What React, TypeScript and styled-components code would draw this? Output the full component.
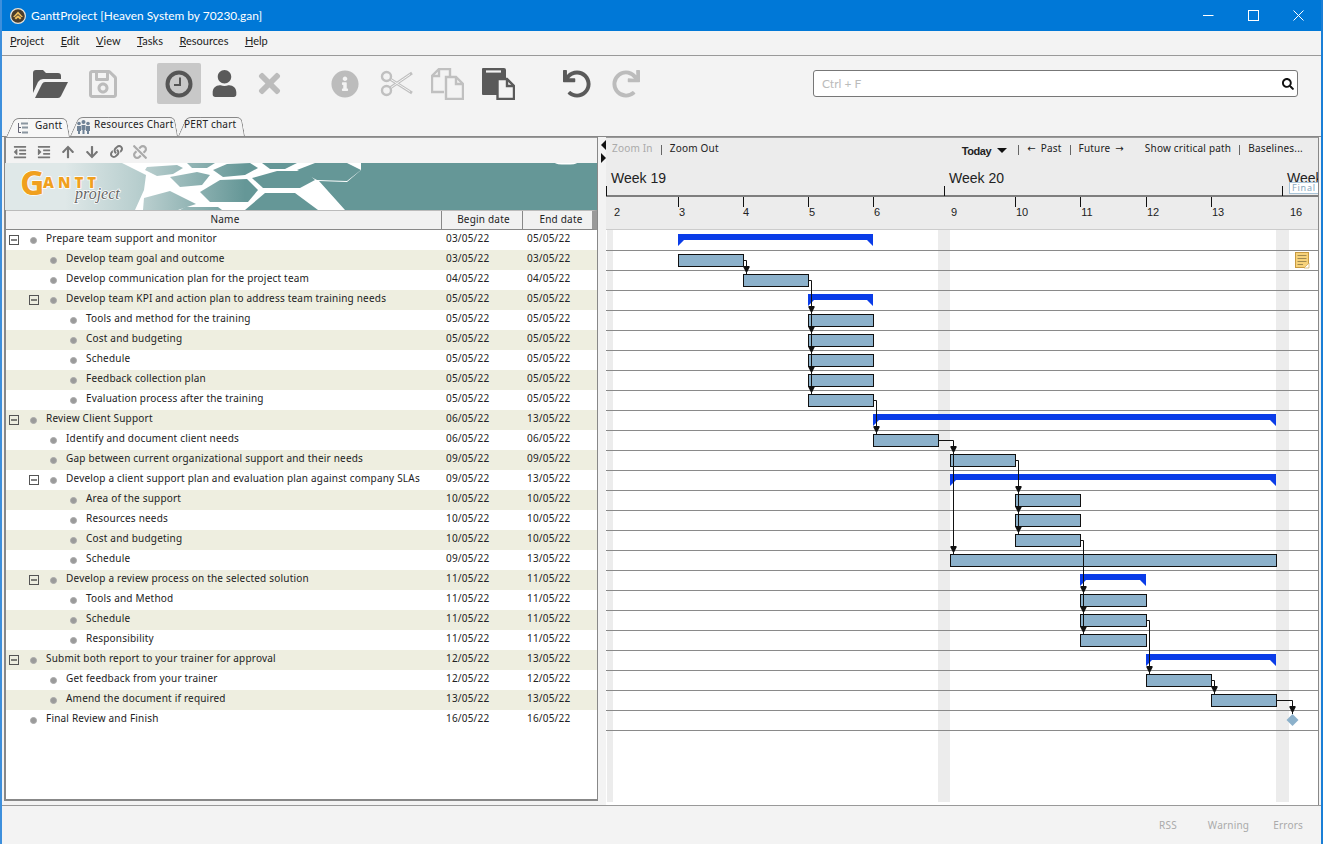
import React from 'react';
import styled, { createGlobalStyle } from 'styled-components';
import {
  FaIndent, FaOutdent, FaArrowUp, FaArrowDown, FaLink, FaUnlink,
  FaRegSave, FaUser, FaTimes, FaInfoCircle, FaUndo, FaRedo, FaSearch,
} from 'react-icons/fa';

const GlobalStyle = createGlobalStyle`
  html, body { margin: 0; padding: 0; overflow: hidden; background: #f3f3f3; }
  * { box-sizing: border-box; }
`;

const UI = `"Noto Sans", "DejaVu Sans", sans-serif`;
const SEGOE = `Lato, "Open Sans", sans-serif`;

type Row = { name: string; begin: string; end: string; level: number; open?: boolean };

const rows: Row[] = [
  { name: 'Prepare team support and monitor', begin: '03/05/22', end: '05/05/22', level: 0, open: true },
  { name: 'Develop team goal and outcome', begin: '03/05/22', end: '03/05/22', level: 1 },
  { name: 'Develop communication plan for the project team', begin: '04/05/22', end: '04/05/22', level: 1 },
  { name: 'Develop team KPI and action plan to address team training needs', begin: '05/05/22', end: '05/05/22', level: 1, open: true },
  { name: 'Tools and method for the training', begin: '05/05/22', end: '05/05/22', level: 2 },
  { name: 'Cost and budgeting', begin: '05/05/22', end: '05/05/22', level: 2 },
  { name: 'Schedule', begin: '05/05/22', end: '05/05/22', level: 2 },
  { name: 'Feedback collection plan', begin: '05/05/22', end: '05/05/22', level: 2 },
  { name: 'Evaluation process after the training', begin: '05/05/22', end: '05/05/22', level: 2 },
  { name: 'Review Client Support', begin: '06/05/22', end: '13/05/22', level: 0, open: true },
  { name: 'Identify and document client needs', begin: '06/05/22', end: '06/05/22', level: 1 },
  { name: 'Gap between current organizational support and their needs', begin: '09/05/22', end: '09/05/22', level: 1 },
  { name: 'Develop a client support plan and evaluation plan against company SLAs', begin: '09/05/22', end: '13/05/22', level: 1, open: true },
  { name: 'Area of the support', begin: '10/05/22', end: '10/05/22', level: 2 },
  { name: 'Resources needs', begin: '10/05/22', end: '10/05/22', level: 2 },
  { name: 'Cost and budgeting', begin: '10/05/22', end: '10/05/22', level: 2 },
  { name: 'Schedule', begin: '09/05/22', end: '13/05/22', level: 2 },
  { name: 'Develop a review process on the selected solution', begin: '11/05/22', end: '11/05/22', level: 1, open: true },
  { name: 'Tools and Method', begin: '11/05/22', end: '11/05/22', level: 2 },
  { name: 'Schedule', begin: '11/05/22', end: '11/05/22', level: 2 },
  { name: 'Responsibility', begin: '11/05/22', end: '11/05/22', level: 2 },
  { name: 'Submit both report to your trainer for approval', begin: '12/05/22', end: '13/05/22', level: 0, open: true },
  { name: 'Get feedback from your trainer', begin: '12/05/22', end: '12/05/22', level: 1 },
  { name: 'Amend the document if required', begin: '13/05/22', end: '13/05/22', level: 1 },
  { name: 'Final Review and Finish', begin: '16/05/22', end: '16/05/22', level: 0 },
];

// [row, x1, x2]
const tasks = [
  [1, 678, 744], [2, 743, 809], [4, 808, 874], [5, 808, 874], [6, 808, 874], [7, 808, 874], [8, 808, 874],
  [10, 873, 939], [11, 950, 1016], [13, 1015, 1081], [14, 1015, 1081], [15, 1015, 1081], [16, 950, 1277],
  [18, 1080, 1147], [19, 1080, 1147], [20, 1080, 1147], [22, 1146, 1212], [23, 1211, 1277],
];
const summaries = [[0, 678, 873], [3, 808, 873], [9, 873, 1276], [12, 950, 1276], [17, 1080, 1146], [21, 1146, 1276]];

// dependency lines, then arrow tips (y of the top of each head)
const links: { d: string; x: number; heads: number[] }[] = [
  { d: 'M744 260.5H746.5V274', x: 746.5, heads: [266] },
  { d: 'M809 280.5H811.5V394', x: 811.5, heads: [306, 326, 346, 366, 386] },
  { d: 'M874 400.5H876.5V434', x: 876.5, heads: [426] },
  { d: 'M939 440.5H953.5V554', x: 953.5, heads: [446, 546] },
  { d: 'M1016 460.5H1018.5V534', x: 1018.5, heads: [486, 506, 526] },
  { d: 'M1081 540.5H1083.5V634', x: 1083.5, heads: [586, 606, 626] },
  { d: 'M1147 620.5H1149.5V674', x: 1149.5, heads: [666] },
  { d: 'M1212 680.5H1214.5V694', x: 1214.5, heads: [686] },
  { d: 'M1277 700.5H1292.5V714', x: 1292.5, heads: [706] },
];

const days = [
  { n: '2', x: 617 }, { n: '3', x: 682, t: 678 }, { n: '4', x: 746, t: 743 }, { n: '5', x: 812, t: 808 },
  { n: '6', x: 877, t: 873 }, { n: '9', x: 954 }, { n: '10', x: 1022, t: 1015 }, { n: '11', x: 1087, t: 1080 },
  { n: '12', x: 1153, t: 1146 }, { n: '13', x: 1218, t: 1211 }, { n: '16', x: 1296 },
];

const Hexes = [
  '147,167 177,165 183,168 173,174 157,176 145,170',
  '187,163 215,163 207,168 192,168',
  '213,170 227,164 250,163 258,168 245,175 223,177',
  '262,163 297,163 285,169 270,169',
  '297,170 315,163 347,163 361,170 347,181 317,180',
  '170,177 197,172 210,175 202,185 180,187',
  '252,178 277,171 305,171 315,180 300,188 263,188',
  '200,192 220,180 247,179 258,190 248,202 210,202',
  '245,210 265,193 295,193 318,210',
  '185,207 218,207 222,210 180,210',
  '143,210 144,198 170,191 196,204 178,210',
];

const App: React.FC = () => {
  return (
    <Window>
      <GlobalStyle />
      <TitleBar>
        <AppIcon viewBox="0 0 16 16">
          <circle cx="8" cy="8" r="7.4" fill="#4a3d2c" stroke="#e8e4da" strokeWidth="1.2" />
          <path d="M8 3.5 13 9H11.2L8 6 4.8 9H3ZM4.5 10 8 7.3 11.5 10 10 11.4 8 9.8 6 11.4Z" fill="#f0c060" />
        </AppIcon>
        <TitleText>GanttProject [Heaven System by 70230.gan]</TitleText>
        <WindowControls>
          <svg width="11" height="11" viewBox="0 0 11 11"><path d="M0 5.5H10.5" stroke="#fff" /></svg>
          <svg width="11" height="11" viewBox="0 0 11 11"><rect x="0.5" y="0.5" width="10" height="10" fill="none" stroke="#fff" /></svg>
          <svg width="11" height="11" viewBox="0 0 11 11"><path d="M0.5 0.5 10.5 10.5M10.5 0.5 0.5 10.5" stroke="#fff" /></svg>
        </WindowControls>
      </TitleBar>

      <MenuBar>
        <MenuItem><u>P</u>roject</MenuItem>
        <MenuItem><u>E</u>dit</MenuItem>
        <MenuItem><u>V</u>iew</MenuItem>
        <MenuItem><u>T</u>asks</MenuItem>
        <MenuItem><u>R</u>esources</MenuItem>
        <MenuItem><u>H</u>elp</MenuItem>
      </MenuBar>

      <Toolbar>
        <ToolGroup $gap={9}>
          <ToolButton>
            <svg width="35" height="28" viewBox="0 0 35 28" fill="#5a5a5a">
              <path d="M0 23V3Q0 0 3 0H10L13 3H25Q28 3 28 6V9H10Q7 9 5 12Z" />
              <path d="M2 28 9 14Q10 12 12 12H35L28 26Q27 28 25 28Z" />
            </svg>
          </ToolButton>
          <ToolButton $muted><FaRegSave size={32} /></ToolButton>
        </ToolGroup>
        <ToolGroup $gap={1}>
          <ToolButton $active>
            <svg width="28" height="28" viewBox="0 0 28 28" fill="none" stroke="#555">
              <circle cx="14" cy="14" r="11.5" strokeWidth="4" />
              <path d="M15 7.5V15H9" strokeWidth="2" />
            </svg>
          </ToolButton>
          <ToolButton><FaUser size={27} /></ToolButton>
          <ToolButton $muted><FaTimes size={31} /></ToolButton>
        </ToolGroup>
        <ToolGroup $gap={7} $after={3}>
          <ToolButton $muted><FaInfoCircle size={28} /></ToolButton>
          <ToolButton $muted>
            <svg width="33" height="27" viewBox="0 0 33 27" fill="none">
              <circle cx="6.5" cy="6.5" r="4.5" stroke="#c0c0c0" strokeWidth="2.4" />
              <circle cx="6.5" cy="20.5" r="4.5" stroke="#c0c0c0" strokeWidth="2.4" />
              <path d="M10 9 32 23M10 18 32 3" stroke="#c0c0c0" strokeWidth="3" />
              <path d="M11 9.6 30 21.6M11 17.4 30 4.4" stroke="#f3f3f3" strokeWidth="1" />
            </svg>
          </ToolButton>
          <ToolButton $muted>
            <svg width="33" height="32" viewBox="0 0 33 32" fill="none" stroke="#c0c0c0" strokeWidth="2.4">
              <path d="M13 24H1V8L8 1H19V9" />
              <path d="M8 1V8H1" />
              <path d="M15 9H25L32 16V31H15Z" fill="#f3f3f3" />
              <path d="M25 9V16H32" />
            </svg>
          </ToolButton>
          <ToolButton>
            <svg width="33" height="32" viewBox="0 0 33 32">
              <path d="M1 0H22Q24 0 24 2V10H15V27H1Q0 27 0 26V1Q0 0 1 0Z" fill="#5a5a5a" />
              <rect x="4" y="2.4" width="15" height="2.2" fill="#f3f3f3" />
              <path d="M15.5 11H25L32 18V31H15.5Z" fill="#f3f3f3" stroke="#5a5a5a" strokeWidth="2.4" />
              <path d="M25 11V18H32" fill="none" stroke="#5a5a5a" strokeWidth="2.4" />
            </svg>
          </ToolButton>
        </ToolGroup>
        <ToolGroup $gap={5}>
          <ToolButton><FaUndo size={28} /></ToolButton>
          <ToolButton $muted><FaRedo size={28} /></ToolButton>
        </ToolGroup>
        <SearchBox>
          <SearchHint>Ctrl + F</SearchHint>
          <FaSearch size={12} color="#111" />
        </SearchBox>
      </Toolbar>

      <TabStrip>
        <Tab $width={64} $pad={11} $active>
          <svg width="12" height="12" viewBox="0 0 12 12" fill="none" stroke="#667">
            <path d="M1.5 1V10.5H4M1.5 5.5H4" />
            <path d="M4 1.5H11M5 5.5H11M5 10.5H11" strokeWidth="2" stroke="#8a96a0" />
          </svg>
          <TabLabel $gap={6}>Gantt</TabLabel>
        </Tab>
        <Tab $width={108} $pad={6}>
          <svg width="15" height="15" viewBox="0 0 15 15" fill="#6f8296">
            <circle cx="3" cy="4.5" r="1.8" /><circle cx="12" cy="4.5" r="1.8" /><circle cx="7.5" cy="3" r="2" />
            <path d="M1 7H5V12H4V15H2V12H1ZM10 7H14V12H13V15H11V12H10ZM5.5 6H9.5V11H8.5V15H6.5V11H5.5Z" />
          </svg>
          <TabLabel $gap={3}>Resources Chart</TabLabel>
        </Tab>
        <Tab $width={67} $pad={6}>
          <TabLabel $gap={0}>PERT chart</TabLabel>
        </Tab>
      </TabStrip>

      <Body>
        <TreePane>
          <TreeTools>
            <TreeTool><FaOutdent size={14} /></TreeTool>
            <TreeTool><FaIndent size={14} /></TreeTool>
            <TreeTool><FaArrowUp size={14} /></TreeTool>
            <TreeTool><FaArrowDown size={14} /></TreeTool>
            <TreeTool><FaLink size={13} /></TreeTool>
            <TreeTool $muted><FaUnlink size={14} /></TreeTool>
          </TreeTools>
          <Banner>
            <svg width="592" height="47" viewBox="5 163 592 47">
              <defs>
                <linearGradient id="cell" gradientUnits="userSpaceOnUse" x1="130" y1="0" x2="245" y2="0">
                  <stop offset="0" stopColor="#c5d6d6" />
                  <stop offset="1" stopColor="#659797" />
                </linearGradient>
              </defs>
              <polygon points="122,163 361,163 361,170 347,182 319,181 345,210 135,210 144,190 146,175" fill="#fff" />
              {Hexes.map(p => <polygon key={p} points={p} fill="url(#cell)" />)}
              <ellipse cx="566" cy="163" rx="11" ry="1.6" fill="#fff" />
              <LogoG x="20" y="195">G</LogoG>
              <LogoRest x="43" y="188">ANTT</LogoRest>
              <LogoProject x="75" y="199">project</LogoProject>
            </svg>
          </Banner>
          <TreeHeader>
            <HeaderCell>Name</HeaderCell>
            <HeaderCell>Begin date</HeaderCell>
            <HeaderCell>End date</HeaderCell>
          </TreeHeader>
          <TreeBody>
            {rows.map((r, i) => (
              <TreeRow key={i} $tint={i % 2 === 1}>
                <NameCell $level={r.level}>
                  <Toggle $show={!!r.open} />
                  <Dot />
                  <span>{r.name}</span>
                </NameCell>
                <DateCell>{r.begin}</DateCell>
                <DateCell>{r.end}</DateCell>
              </TreeRow>
            ))}
          </TreeBody>
        </TreePane>

        <Gutter>
          <Arrow $dir="left" />
          <Arrow $dir="right" />
        </Gutter>

        <ChartPane>
          <ChartTools>
            <ToolLink $off>Zoom In</ToolLink>
            <Sep />
            <ToolLink>Zoom Out</ToolLink>
            <TodayLink>Today<Caret /></TodayLink>
            <Sep />
            <ToolLink $arrow>← Past</ToolLink>
            <Sep />
            <ToolLink $arrow>Future →</ToolLink>
            <ToolLink $push>Show critical path</ToolLink>
            <Sep />
            <ToolLink>Baselines...</ToolLink>
          </ChartTools>
          <Timeline>
            <svg width="712" height="64" viewBox="606 165 712 64">
              <WeekText x="611" y="183">Week 19</WeekText>
              <WeekText x="949" y="183">Week 20</WeekText>
              <WeekText x="1287" y="183">Week 21</WeekText>
              <path d="M606 196H1318" stroke="#111" />
              <path d="M606.5 186V196M944.5 186V196M1282.5 186V196" stroke="#111" />
              {days.map(d => (
                <React.Fragment key={d.n}>
                  {d.t && <path d={`M${d.t + 0.5} 197V207`} stroke="#111" />}
                  <DayText x={d.x} y="216">{d.n}</DayText>
                </React.Fragment>
              ))}
              <rect x="1289.5" y="182.5" width="40" height="11" fill="#fff" stroke="#a9c4d8" />
              <FinalText x="1292" y="191">Final</FinalText>
            </svg>
          </Timeline>
          <Chart>
            <svg width="712" height="573" viewBox="606 230 712 573">
              <rect x="607" y="230" width="6" height="572" fill="#ececec" />
              <rect x="938" y="230" width="12" height="572" fill="#ececec" />
              <rect x="1276" y="230" width="13" height="572" fill="#ececec" />
              {rows.map((_, i) => (
                <path key={i} d={`M606 ${250.5 + i * 20}H1318`} stroke="#8a8a8a" />
              ))}
              {summaries.map(([r, a, b]) => {
                const y = 234 + r * 20;
                return (
                  <polygon
                    key={r}
                    points={`${a},${y} ${b},${y} ${b},${y + 12} ${b - 6},${y + 6} ${a + 6},${y + 6} ${a},${y + 12}`}
                    fill="#0a3ce8"
                  />
                );
              })}
              {tasks.map(([r, a, b]) => (
                <rect key={r} x={a + 0.5} y={254.5 + (r - 1) * 20} width={b - a - 1} height="12" fill="#8cb1cb" stroke="#111" />
              ))}
              {links.map(l => (
                <g key={l.d}>
                  <path d={l.d} fill="none" stroke="#111" />
                  {l.heads.map(h => (
                    <polygon
                      key={h}
                      points={`${l.x - 3},${h} ${l.x + 3},${h} ${l.x + 3},${h + 1.5} ${l.x + 1},${h + 5.5} ${l.x},${h + 6.5} ${l.x - 1},${h + 5.5} ${l.x - 3},${h + 1.5}`}
                      fill="#111"
                    />
                  ))}
                </g>
              ))}
              <polygon points="1292.5,714 1298.5,720 1292.5,726 1286.5,720" fill="#8cb1cb" />
              <g>
                <rect x="1295.5" y="252.5" width="13" height="15" fill="#f7d27a" stroke="#c89a40" />
                <path d="M1297.5 255.5H1306.5M1297.5 258.5H1306.5M1297.5 261.5H1306.5M1297.5 264.5H1303" stroke="#a08a50" />
                <path d="M1304 268 1309 263V268Z" fill="#fff" stroke="#c89a40" strokeWidth="0.6" />
              </g>
            </svg>
          </Chart>
        </ChartPane>
      </Body>

      <StatusBar>
        <StatusItem>RSS</StatusItem>
        <StatusItem>Warning</StatusItem>
        <StatusItem>Errors</StatusItem>
      </StatusBar>
    </Window>
  );
};

export default App;

const Window = styled.div`
  width: 1323px;
  height: 844px;
  display: flex;
  flex-direction: column;
  background: #f3f3f3;
  border-left: 2px solid #3d8fdc;
  border-right: 2px solid #1a7fd6;
  font-family: ${UI};
  overflow: hidden;
`;

const TitleBar = styled.div`
  height: 31px;
  flex: none;
  margin: 0 -2px;
  padding-left: 10px;
  display: flex;
  align-items: center;
  background: #0078d7;
  color: #fff;
`;

const AppIcon = styled.svg`
  width: 16px;
  height: 16px;
  flex: none;
`;

const TitleText = styled.div`
  margin-left: 5px;
  font-family: ${SEGOE};
  font-size: 11.9px;
`;

const WindowControls = styled.div`
  margin-left: auto;
  margin-right: 19px;
  display: flex;
  gap: 34px;
  align-items: center;
`;

const MenuBar = styled.div`
  height: 25px;
  flex: none;
  padding: 0 0 5px 8px;
  display: flex;
  align-items: center;
  gap: 16.5px;
  border-bottom: 1px solid #999;
`;

const MenuItem = styled.div`
  font-family: ${SEGOE};
  font-size: 11px;
  color: #222;
`;

const Toolbar = styled.div`
  height: 60px;
  flex: none;
  padding: 7px 23px 0 26px;
  display: flex;
  align-items: flex-start;
  gap: 32px;
`;

const ToolGroup = styled.div<{ $gap: number; $after?: number }>`
  display: flex;
  gap: ${p => p.$gap}px;
  margin-right: ${p => p.$after ?? 0}px;
`;

const ToolButton = styled.div<{ $active?: boolean; $muted?: boolean }>`
  width: 44px;
  height: 41px;
  display: flex;
  align-items: center;
  justify-content: center;
  border-radius: 2px;
  color: ${p => (p.$muted ? '#bcbcbc' : '#5a5a5a')};
  background: ${p => (p.$active ? '#c8c8c8' : 'transparent')};
`;

const SearchBox = styled.div`
  margin: 7px 0 0 auto;
  width: 485px;
  height: 27px;
  padding: 0 3px 0 8px;
  display: flex;
  align-items: center;
  justify-content: space-between;
  background: #fff;
  border: 1px solid #777;
  border-radius: 3px;
`;

const SearchHint = styled.span`
  font-family: ${SEGOE};
  font-size: 12px;
  color: #bbb;
`;

const TabStrip = styled.div`
  height: 21px;
  flex: none;
  padding-left: 4px;
  display: flex;
  align-items: flex-end;
  border-bottom: 1px solid #888;
`;

const Tab = styled.div<{ $width: number; $pad: number; $active?: boolean }>`
  position: relative;
  isolation: isolate;
  width: ${p => p.$width}px;
  height: 19px;
  margin-bottom: ${p => (p.$active ? '-1px' : '0')};
  padding-left: ${p => p.$pad}px;
  display: flex;
  align-items: center;
  &::before,
  &::after {
    content: '';
    position: absolute;
    z-index: -1;
    top: 0;
    bottom: 0;
    width: 60%;
    background: ${p => (p.$active ? '#f7f7f7' : '#f3f3f3')};
    border-top: 1px solid #888;
  }
  &::before {
    left: 0;
    border-left: 1px solid #888;
    border-top-left-radius: 5px;
    transform-origin: bottom left;
    transform: skewX(-24deg);
  }
  &::after {
    right: 0;
    border-right: 1px solid #888;
    border-top-right-radius: 5px;
    transform-origin: bottom right;
    transform: skewX(10deg);
  }
`;

const TabLabel = styled.span<{ $gap: number }>`
  margin-left: ${p => p.$gap}px;
  padding-bottom: 5px;
  font-size: 10px;
  letter-spacing: 0.2px;
  color: #222;
  white-space: nowrap;
`;

const Body = styled.div`
  height: 669px;
  flex: none;
  display: flex;
  padding-left: 2px;
  border-bottom: 1px solid #999;
`;

const TreePane = styled.div`
  width: 594px;
  height: 664px;
  flex: none;
  display: flex;
  flex-direction: column;
  border-left: 2px solid #888;
  border-right: 1px solid #888;
  border-bottom: 2px solid #888;
`;

const TreeTools = styled.div`
  height: 26px;
  flex: none;
  padding: 2px 0 0 2px;
  display: flex;
  align-items: center;
  border-top: 1px solid #999;
`;

const TreeTool = styled.div<{ $muted?: boolean }>`
  width: 24px;
  display: flex;
  justify-content: center;
  color: ${p => (p.$muted ? '#aaa' : '#777')};
`;

const Banner = styled.div`
  height: 47px;
  flex: none;
  overflow: hidden;
  line-height: 0;
  background: linear-gradient(90deg, #dfe8e8 0, #dfe8e8 60px, #b9cfcf 130px, #659797 260px);
  margin-left: -1px;
  & > svg { background: linear-gradient(90deg, transparent 0, transparent 355px, #659797 355px); }
`;

const LogoG = styled.text`
  font-family: "Open Sans", sans-serif;
  font-weight: 700;
  font-size: 34px;
  fill: #f0a01e;
  stroke: #fff;
  stroke-width: 1.5px;
  paint-order: stroke;
`;

const LogoRest = styled.text`
  font-family: "Open Sans", sans-serif;
  font-weight: 800;
  font-size: 15px;
  letter-spacing: 4px;
  fill: #f0a01e;
  stroke: #fff;
  stroke-width: 1.5px;
  paint-order: stroke;
`;

const LogoProject = styled.text`
  font-family: "Liberation Serif", serif;
  font-style: italic;
  font-size: 16px;
  fill: #666;
  stroke: #fff;
  stroke-width: 1.5px;
  paint-order: stroke;
`;

const TreeHeader = styled.div`
  height: 20px;
  flex: none;
  display: grid;
  grid-template-columns: 436px 81px 70px;
  background: #f1f1f1;
  border-bottom: 1px solid #888;
  border-top: 1px solid #bbb;
  border-right: 5px solid #999;
`;

const HeaderCell = styled.div`
  padding: 0 0 3px 3px;
  display: flex;
  align-items: center;
  justify-content: center;
  font-size: 10px;
  letter-spacing: 0.2px;
  color: #222;
  border-right: 1px solid #888;
  &:last-child { padding-left: 6px; border-right: none; }
`;

const TreeBody = styled.div`
  flex: 1;
  background: #fff;
`;

const TreeRow = styled.div<{ $tint: boolean }>`
  height: 20px;
  display: grid;
  grid-template-columns: 436px 81px 1fr;
  background: ${p => (p.$tint ? '#eeeee0' : '#fff')};
  font-size: 10px;
  letter-spacing: 0.2px;
  color: #222;
`;

const NameCell = styled.div<{ $level: number }>`
  padding-left: ${p => 3 + p.$level * 20}px;
  display: flex;
  align-items: center;
  white-space: nowrap;
  & > span { padding-bottom: 4px; }
`;

const Toggle = styled.div<{ $show: boolean }>`
  position: relative;
  width: 10px;
  height: 10px;
  flex: none;
  visibility: ${p => (p.$show ? 'visible' : 'hidden')};
  border: 1px solid #555;
  &::after {
    content: '';
    position: absolute;
    left: 1px;
    right: 1px;
    top: 3px;
    height: 2px;
    background: #333;
    transform: scaleY(0.6);
  }
`;

const Dot = styled.div`
  width: 7px;
  height: 7px;
  flex: none;
  margin: 1px 9px 0 11px;
  border-radius: 50%;
  background: #9a9a9a;
  border: 1px solid #aaa;
`;

const DateCell = styled.div`
  padding: 0 0 4px 4px;
  display: flex;
  align-items: center;
`;

const Gutter = styled.div`
  width: 8px;
  flex: none;
  padding: 3px 0 0 3px;
  display: flex;
  flex-direction: column;
  gap: 3px;
`;

const Arrow = styled.div<{ $dir: 'left' | 'right' }>`
  width: 0;
  height: 0;
  border-top: 5px solid transparent;
  border-bottom: 5px solid transparent;
  ${p => (p.$dir === 'left' ? 'border-right: 5px solid #111;' : 'border-left: 5px solid #111;')}
`;

const ChartPane = styled.div`
  width: 713px;
  flex: none;
  display: flex;
  flex-direction: column;
  background: #fff;
  border-top: 1px solid #999;
  border-right: 1px solid #888;
`;

const ChartTools = styled.div`
  height: 27px;
  flex: none;
  padding: 0 15px 7px 6px;
  display: flex;
  align-items: center;
  gap: 8px;
  background: #ececec;
`;

const ToolLink = styled.span<{ $off?: boolean; $push?: boolean; $arrow?: boolean }>`
  font-size: 10px;
  letter-spacing: 0.2px;
  word-spacing: ${p => (p.$arrow ? '2px' : '0')};
  white-space: nowrap;
  color: ${p => (p.$off ? '#aaa' : '#222')};
  margin-left: ${p => (p.$push ? '13px' : '0')};
`;

const TodayLink = styled.span`
  margin-left: auto;
  margin-right: 3px;
  padding-top: 5px;
  display: flex;
  align-items: center;
  gap: 6px;
  font-family: "Liberation Sans", sans-serif;
  font-weight: 700;
  font-size: 11px;
  letter-spacing: -0.4px;
  color: #222;
`;

const Caret = styled.i`
  width: 0;
  height: 0;
  border-left: 5px solid transparent;
  border-right: 5px solid transparent;
  border-top: 5px solid #111;
`;

const Sep = styled.span`
  width: 1px;
  height: 10px;
  margin-top: 3px;
  background: #666;
`;

const Timeline = styled.div`
  height: 65px;
  flex: none;
  line-height: 0;
  background: #ececec;
  border-bottom: 1px solid #ccc;
`;

const WeekText = styled.text`
  font-family: "Liberation Sans", sans-serif;
  font-size: 14px;
  fill: #222;
`;

const DayText = styled.text`
  font-family: "Liberation Sans", sans-serif;
  font-size: 11px;
  text-anchor: middle;
  fill: #222;
`;

const FinalText = styled.text`
  font-family: ${UI};
  font-size: 9px;
  letter-spacing: 0.8px;
  fill: #88a8c0;
`;

const Chart = styled.div`
  flex: 1;
  line-height: 0;
  overflow: hidden;
`;

const StatusBar = styled.div`
  flex: 1;
  padding: 0 18px 0 0;
  display: flex;
  align-items: center;
  justify-content: flex-end;
  gap: 24px;
`;

const StatusItem = styled.span`
  font-size: 10px;
  letter-spacing: 0.2px;
  color: #aaa;
  &:first-child { margin-right: 7px; }
`;
